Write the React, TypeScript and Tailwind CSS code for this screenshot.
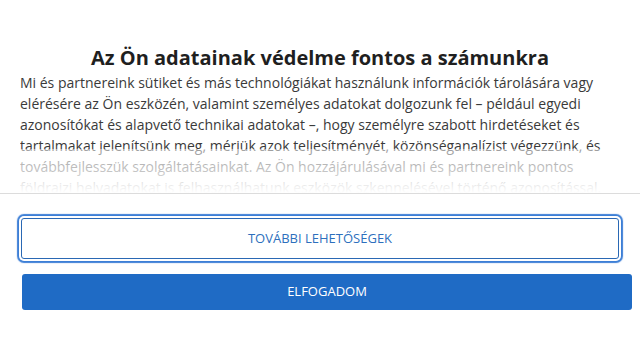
export default function App() {
  return (
    <div className="w-[640px] h-[341px] bg-white overflow-hidden font-['Open_Sans',sans-serif]">
      <div className="px-5 pt-[44px]">
        <h2 className="text-center text-[20px] leading-[27px] font-bold text-[#1f1f1f]">
          Az Ön adatainak védelme fontos a számunkra
        </h2>
        <div className="relative h-[121px] overflow-hidden mt-[1px]">
          <p className="text-[14px] leading-[21px] text-[#3a3a3a] pr-3">
            Mi és partnereink sütiket és más technológiákat használunk információk tárolására vagy
            elérésére az Ön eszközén, valamint személyes adatokat dolgozunk fel – például egyedi
            azonosítókat és alapvető technikai adatokat –, hogy személyre szabott hirdetéseket és
            tartalmakat jelenítsünk meg, mérjük azok teljesítményét, közönséganalízist végezzünk, és
            továbbfejlesszük szolgáltatásainkat. Az Ön hozzájárulásával mi és partnereink pontos
            földrajzi helyadatokat is felhasználhatunk eszközök szkennelésével történő azonosítással. Az előbbi
            célokból az Ön eszközén információkat tárolhatunk.
          </p>
          <div className="absolute inset-x-0 bottom-0 h-[44px] bg-gradient-to-b from-white/50 via-white/70 to-white" />
        </div>
      </div>
      <div className="border-t border-[#dcdcdc] px-[21px] pt-[24px]">
        <button className="w-full h-[41px] bg-white border border-[#2a68b4] rounded-[3px] text-[13px] text-[#2d6fbd] uppercase shadow-[0_0_0_2px_#fff,0_0_1px_4px_#3d7fd6]">
          További lehetőségek
        </button>
        <button className="mt-[15px] ml-[1px] w-[610px] h-[36px] bg-[#1f6bc5] rounded-[3px] text-[13px] text-white uppercase">
          Elfogadom
        </button>
      </div>
    </div>
  );
}
